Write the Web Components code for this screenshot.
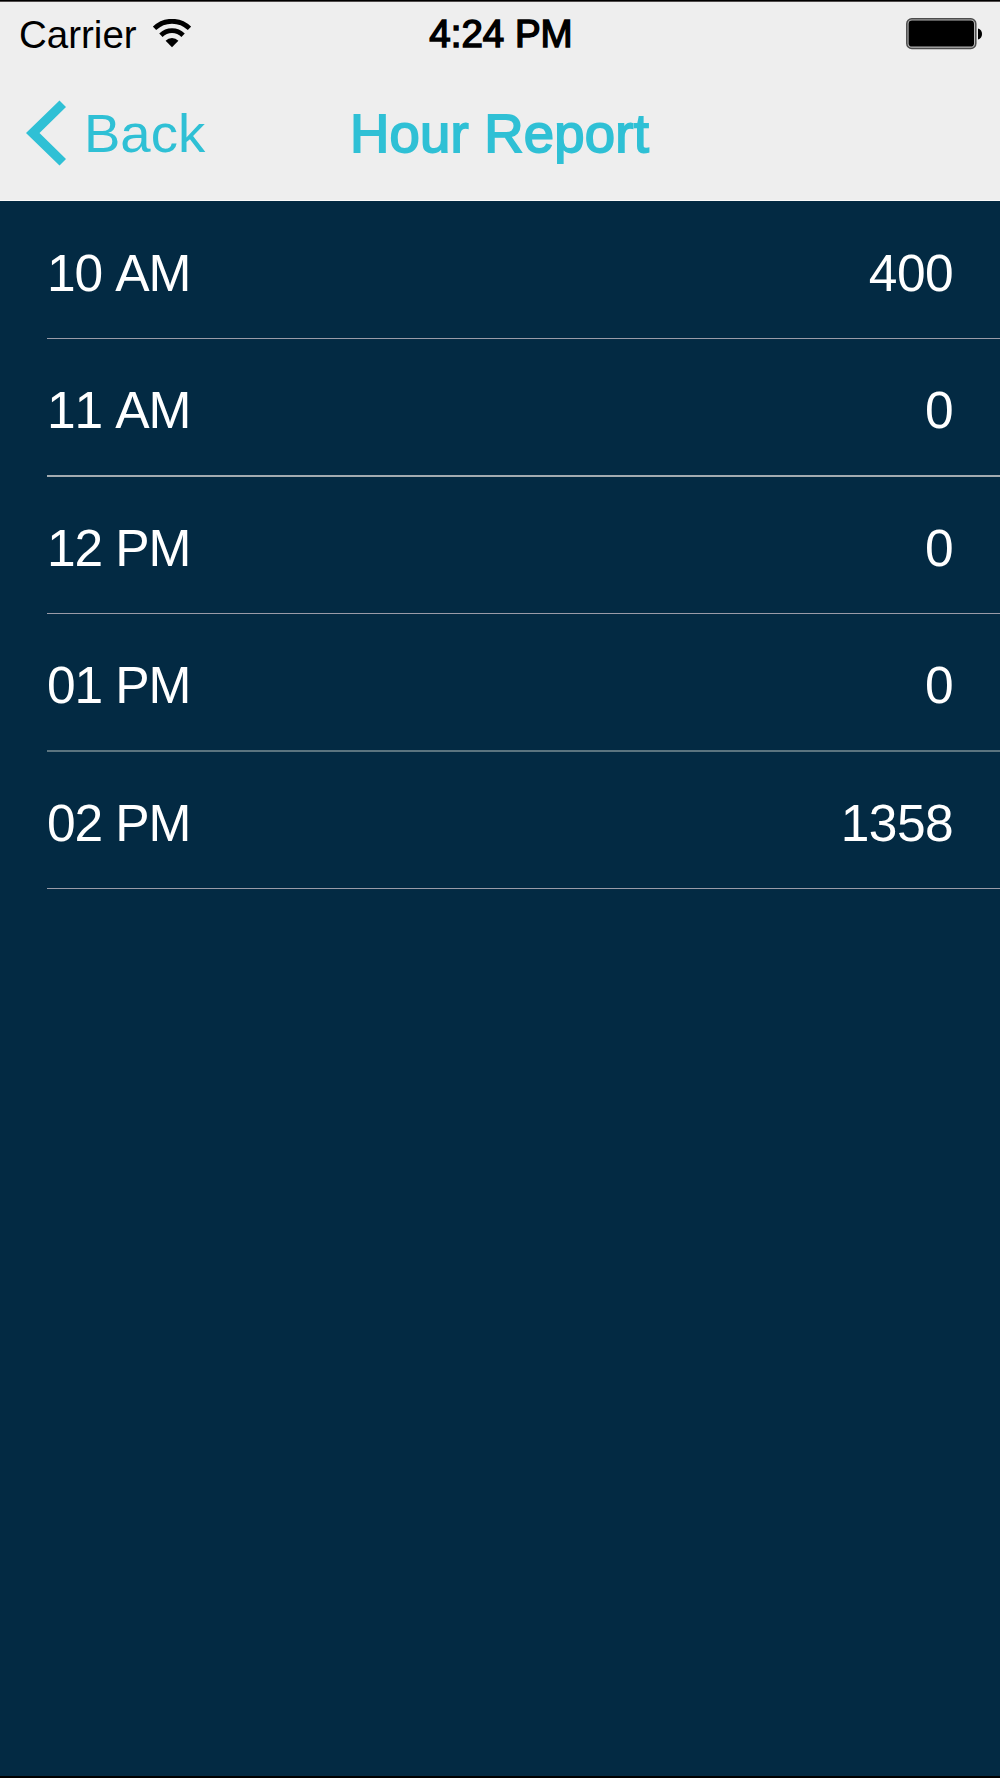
<!DOCTYPE html>
<html lang="en">
<head>
<meta charset="utf-8">
<title>Hour Report</title>
<style>
    body {
        margin: 0;
        font-family: "Liberation Sans", Arial, sans-serif;
        font-kerning: none;
    }
</style>
</head>
<body>

<phone-screen>
    <status-bar slot="header" carrier="Carrier" time="4:24 PM"></status-bar>
    <nav-bar slot="header" back="Back">Hour Report</nav-bar>
    <hour-row value="400">10 AM</hour-row>
    <hour-row value="0" class="thick">11 AM</hour-row>
    <hour-row value="0">12 PM</hour-row>
    <hour-row value="0" class="soft">01 PM</hour-row>
    <hour-row value="1358">02 PM</hour-row>
</phone-screen>

<script>
const screenTemplate = document.createElement('template');

screenTemplate.innerHTML = `
    <style>
        :host {
            display: flex;
            flex-direction: column;
            box-sizing: border-box;
            width: 1000px;
            height: 1778px;
            background: #032a43;
            border-top: 1px solid #000;
            border-bottom: 2px solid #000;
        }
        header {
            box-sizing: border-box;
            height: 200px;
            background: #eee;
            border-top: 1px solid #504c4c;
            border-bottom: 1px solid #fbfbfb;
        }
        main {
            display: flex;
            flex-direction: column;
            flex: 1;
        }
        ::slotted(hour-row) {
            --line: #9a9ba8;
            --line-height: 1px;
            height: 138px;
        }
        ::slotted(hour-row.thick) {
            --line: #a3abb0;
            --line-height: 2px;
        }
        ::slotted(hour-row:nth-of-type(3)) {
            height: 137px;
        }
        ::slotted(hour-row.soft) {
            --line: #5b747f;
            --line-height: 2px;
        }
        ::slotted(hour-row:nth-of-type(5)) {
            height: 137px;
        }
    </style>

    <header><slot name="header"></slot></header>
    <main><slot></slot></main>
    `

const statusTemplate = document.createElement('template');

statusTemplate.innerHTML = `
    <style>
        :host {
            display: grid;
            grid-template-columns: 1fr auto 1fr;
            align-items: center;
            box-sizing: border-box;
            height: 64px;
            padding: 0 17px 0 19px;
            color: #000;
            font-size: 38.5px;
        }
        .left {
            display: flex;
            align-items: center;
            gap: 16px;
        }
        .carrier {
            padding-top: 1px;
        }
        .time {
            font-size: 38.5px;
            -webkit-text-stroke: 1.5px #000;
        }
        .battery {
            justify-self: end;
        }
        svg {
            display: block;
        }
    </style>

    <div class="left">
        <span class="carrier"></span>
        <svg width="38" height="30" viewBox="0 0 38 30">
            <path d="M1.5 9.4 A25 25 0 0 1 36.5 9.4" fill="none" stroke="#000" stroke-width="4.8"/>
            <path d="M7.9 16.2 A16 16 0 0 1 30.1 16.2" fill="none" stroke="#000" stroke-width="4.8"/>
            <path d="M12.6 21.7 A9 9 0 0 1 25.4 21.7 L19 28.2 Z"/>
        </svg>
    </div>
    <span class="time"></span>
    <svg class="battery" width="77" height="32" viewBox="0 0 77 32">
        <rect x="0.8" y="0.8" width="69" height="29.6" rx="5" fill="#b5b5b5" stroke="#4c4c4c" stroke-width="1.5"/>
        <rect x="2.6" y="2.6" width="65.4" height="26" rx="3.4"/>
        <path d="M72 10.5 C77.4 11.5 77.4 20.5 72 21.5 Z"/>
    </svg>
    `

const navTemplate = document.createElement('template');

navTemplate.innerHTML = `
    <style>
        :host {
            display: grid;
            grid-template-columns: 1fr auto 1fr;
            align-items: center;
            box-sizing: border-box;
            height: 134px;
            padding: 0 27px 0 26px;
            color: #2fc0d5;
            font-size: 54.5px;
        }
        .back {
            display: flex;
            align-items: center;
            gap: 18px;
        }
        .title {
            letter-spacing: 0.2px;
            -webkit-text-stroke: 1.8px #2fc0d5;
        }
        svg {
            display: block;
        }
    </style>

    <div class="back">
        <svg width="40" height="66" viewBox="0 0 40 66">
            <path d="M0 33 L33.5 0.5 L40 7 L13.5 33 L40 59 L33.5 65.5 Z" fill="currentColor"/>
        </svg>
        <span class="label"></span>
    </div>
    <span class="title"><slot></slot></span>
    `

const rowTemplate = document.createElement('template');

rowTemplate.innerHTML = `
    <style>
        :host {
            display: flex;
            box-sizing: border-box;
            padding-left: 47px;
            color: #fff;
            font-size: 51.5px;
        }
        .cell {
            display: flex;
            flex: 1;
            align-items: center;
            justify-content: space-between;
            box-sizing: border-box;
            padding: 6px 47px 0 0;
            border-bottom: var(--line-height) solid var(--line);
        }
        .hour {
            letter-spacing: -1.1px;
        }
        .value {
            letter-spacing: -0.6px;
        }
    </style>

    <div class="cell">
        <span class="hour"><slot></slot></span>
        <span class="value"></span>
    </div>
    `

class PhoneScreen extends HTMLElement {
    constructor() {
        super();

        this._shadowRoot = this.attachShadow({mode: 'open'});
        this._shadowRoot.appendChild(screenTemplate.content.cloneNode(true));
    }
}

class StatusBar extends HTMLElement {
    constructor() {
        super();

        this._shadowRoot = this.attachShadow({mode: 'open'});
        this._shadowRoot.appendChild(statusTemplate.content.cloneNode(true));

        this.$carrier = this._shadowRoot.querySelector('.carrier');
        this.$time = this._shadowRoot.querySelector('.time');
    }

    connectedCallback() {
        this.$carrier.textContent = this.getAttribute('carrier');
        this.$time.textContent = this.getAttribute('time');
    }
}

class NavBar extends HTMLElement {
    constructor() {
        super();

        this._shadowRoot = this.attachShadow({mode: 'open'});
        this._shadowRoot.appendChild(navTemplate.content.cloneNode(true));

        this.$label = this._shadowRoot.querySelector('.label');
    }

    connectedCallback() {
        this.$label.textContent = this.getAttribute('back');
    }
}

class HourRow extends HTMLElement {
    constructor() {
        super();

        this._shadowRoot = this.attachShadow({mode: 'open'});
        this._shadowRoot.appendChild(rowTemplate.content.cloneNode(true));

        this.$value = this._shadowRoot.querySelector('.value');
    }

    connectedCallback() {
        this.$value.textContent = this.getAttribute('value');
    }
}

window.customElements.define('phone-screen', PhoneScreen);
window.customElements.define('status-bar', StatusBar);
window.customElements.define('nav-bar', NavBar);
window.customElements.define('hour-row', HourRow);
</script>
</body>
</html>
